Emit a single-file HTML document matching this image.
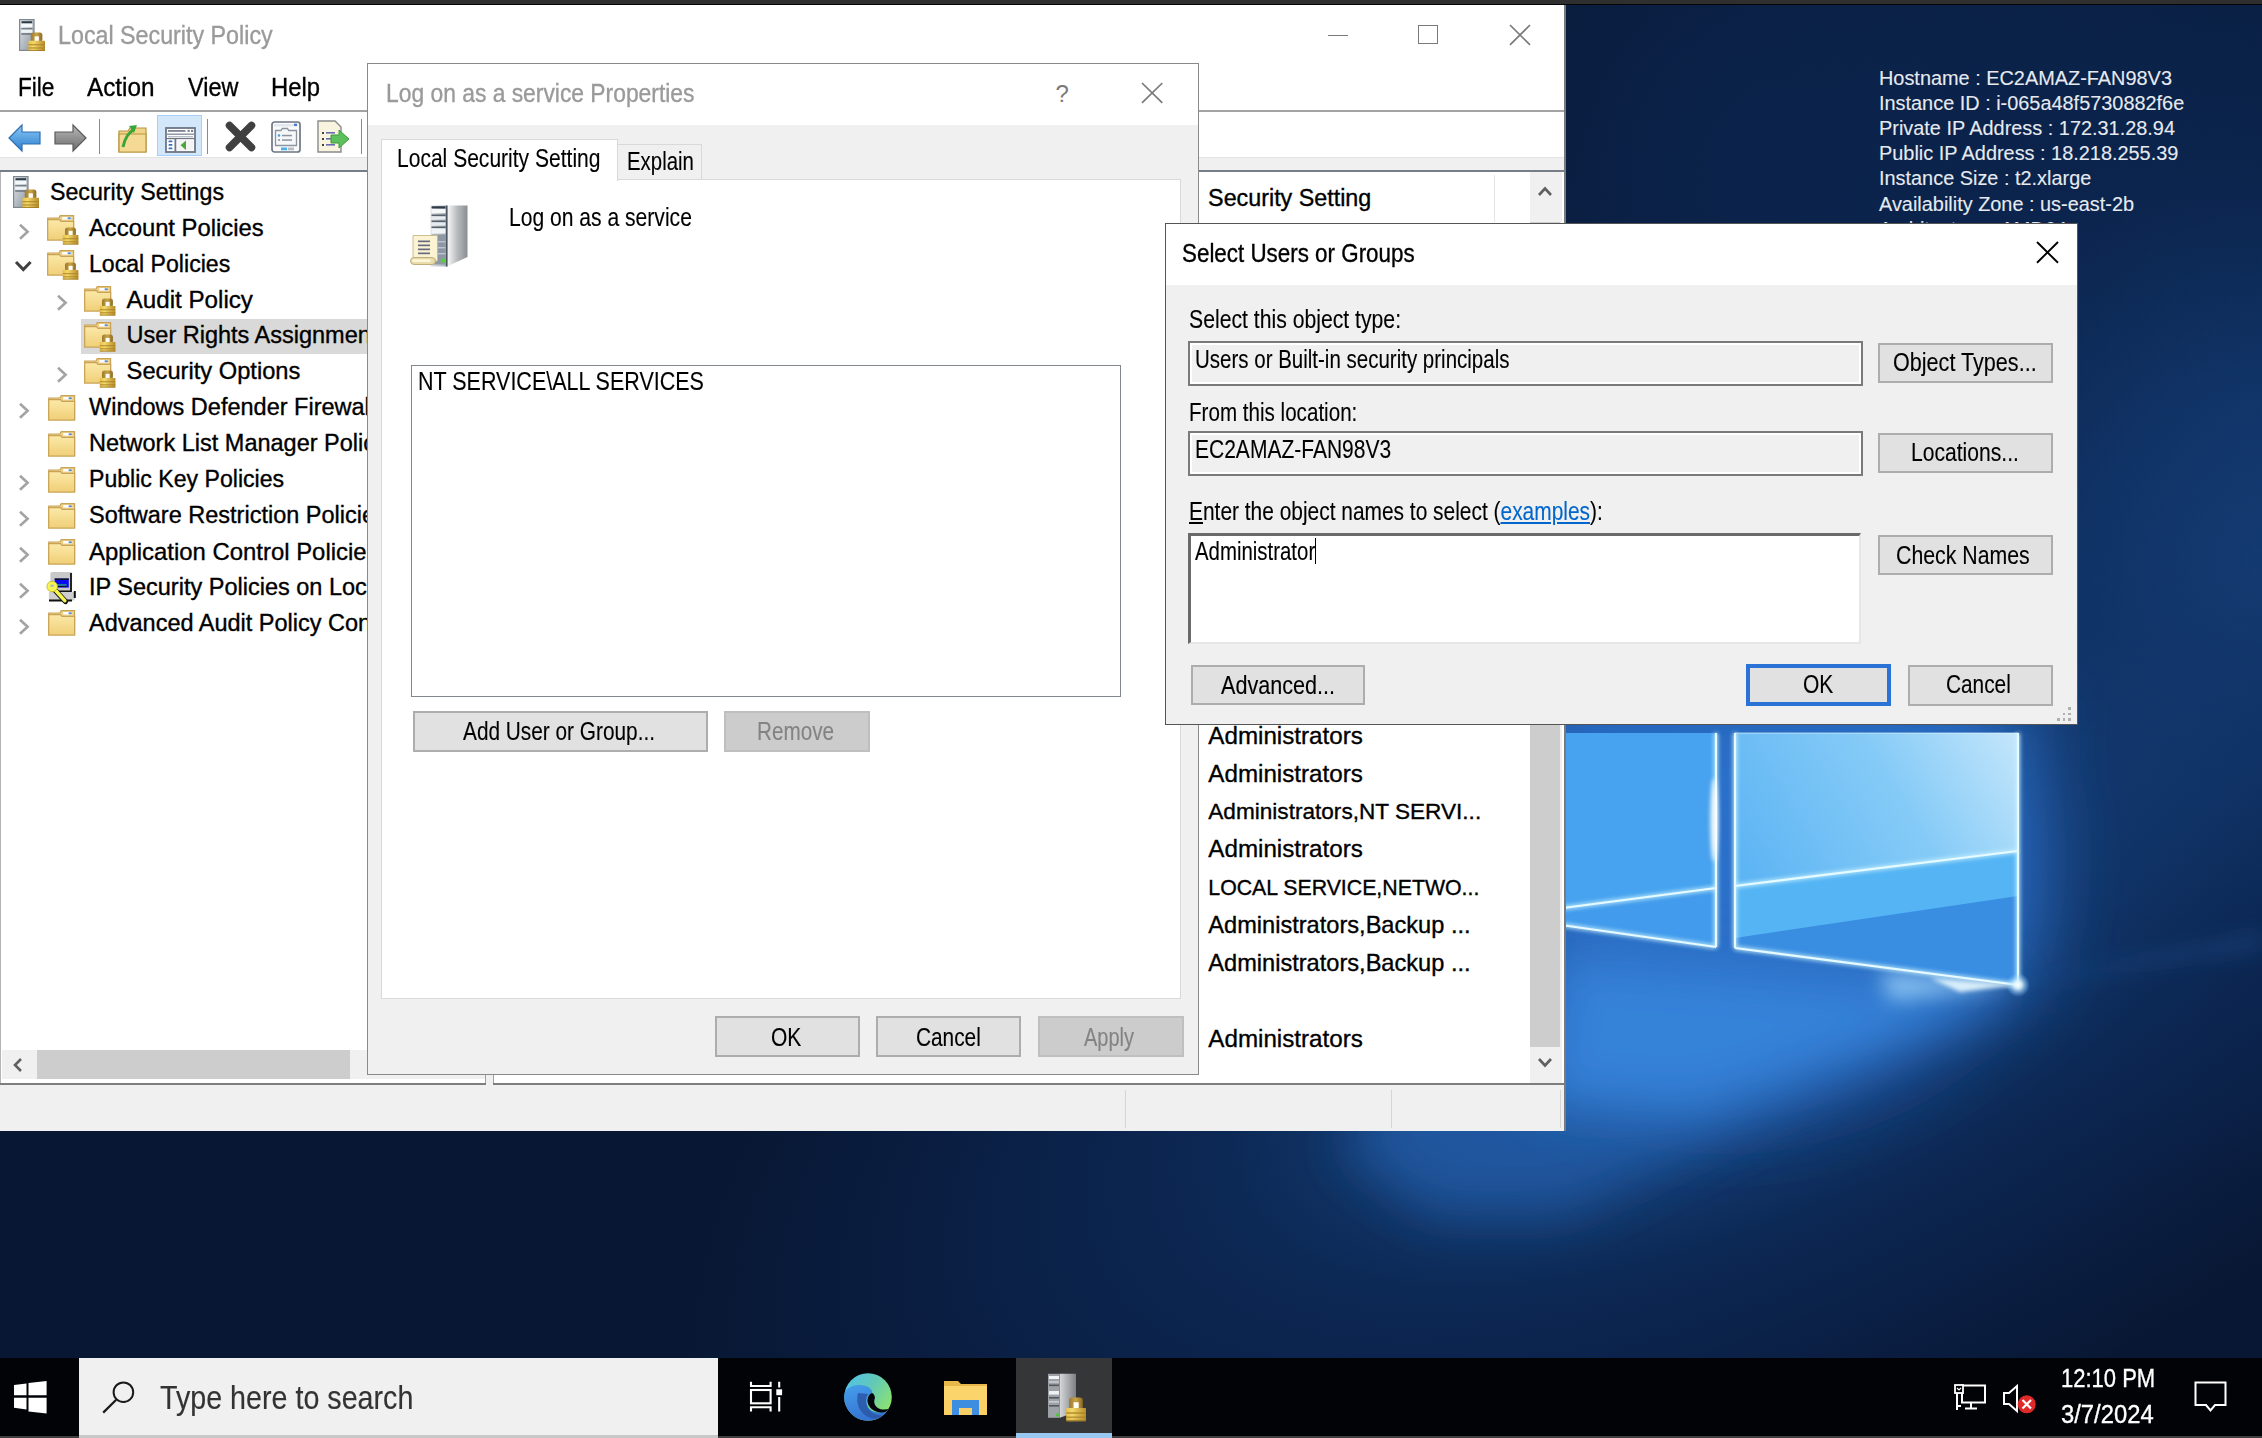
<!DOCTYPE html>
<html><head><meta charset="utf-8"><title>Local Security Policy</title>
<style>
html,body{margin:0;padding:0;}
body{width:2262px;height:1438px;overflow:hidden;position:relative;font-family:"Liberation Sans", sans-serif;background:#0a1c3c;}
.r{position:absolute;display:block;}
.t{position:absolute;white-space:pre;font-family:"Liberation Sans", sans-serif;-webkit-text-stroke:0.35px currentColor;}
</style></head><body>
<svg class="r" style="left:0.00px;top:0.00px;" width="2262" height="1438" viewBox="0 0 2262 1438">
<defs>
  <radialGradient id="wbase" cx="1750" cy="960" r="1150" gradientUnits="userSpaceOnUse" gradientTransform="translate(1750 960) rotate(-25) scale(1 0.45) translate(-1750 -960)">
  <stop offset="0" stop-color="#2660b0"/><stop offset="0.22" stop-color="#17447f"/><stop offset="0.5" stop-color="#0c2854"/><stop offset="0.8" stop-color="#0a1d40"/><stop offset="1" stop-color="#081834"/>
 </radialGradient>
 <radialGradient id="wtr" cx="2262" cy="560" r="380" gradientUnits="userSpaceOnUse">
  <stop offset="0" stop-color="#1a4a8a" stop-opacity="0.45"/><stop offset="1" stop-color="#1a4a8a" stop-opacity="0"/>
 </radialGradient>
 <radialGradient id="wtl" cx="1750" cy="150" r="600" gradientUnits="userSpaceOnUse">
  <stop offset="0" stop-color="#0e2c5e" stop-opacity="0.45"/><stop offset="1" stop-color="#0e2c5e" stop-opacity="0"/>
 </radialGradient>
 <radialGradient id="wtop" cx="2262" cy="420" r="760" gradientUnits="userSpaceOnUse">
  <stop offset="0" stop-color="#113a74" stop-opacity="0.6"/><stop offset="0.6" stop-color="#0c2a5a" stop-opacity="0.35"/><stop offset="1" stop-color="#0c2a5a" stop-opacity="0"/>
 </radialGradient>
<filter id="blur40" x="-50%" y="-50%" width="200%" height="200%"><feGaussianBlur stdDeviation="38"/></filter>
 <filter id="blur25" x="-50%" y="-50%" width="200%" height="200%"><feGaussianBlur stdDeviation="26"/></filter>
 <filter id="blur12" x="-50%" y="-50%" width="200%" height="200%"><feGaussianBlur stdDeviation="10"/></filter>
 <filter id="blur3" x="-50%" y="-50%" width="200%" height="200%"><feGaussianBlur stdDeviation="2.2"/></filter>
 <linearGradient id="paneR" x1="1735" y1="900" x2="2018" y2="733" gradientUnits="userSpaceOnUse">
  <stop offset="0" stop-color="#58b2f3"/><stop offset="0.6" stop-color="#86cbf7"/><stop offset="1" stop-color="#c4e6fb"/>
 </linearGradient>
 <radialGradient id="spot2" cx="2018" cy="985" r="12" gradientUnits="userSpaceOnUse"><stop offset="0" stop-color="#ffffff"/><stop offset="0.3" stop-color="#e0f6ff" stop-opacity="0.9"/><stop offset="1" stop-color="#7cc8ff" stop-opacity="0"/></radialGradient>
 <radialGradient id="spot" cx="2018" cy="985" r="60" gradientUnits="userSpaceOnUse">
  <stop offset="0" stop-color="#ffffff" stop-opacity="1"/><stop offset="0.25" stop-color="#bfe6ff" stop-opacity="0.8"/><stop offset="1" stop-color="#5ab0f0" stop-opacity="0"/>
 </radialGradient>
</defs>
<rect x="0" y="0" width="2262" height="1438" fill="#081834"/><rect x="0" y="0" width="2262" height="1438" fill="url(#wbase)"/>
<rect x="0" y="0" width="2262" height="1438" fill="url(#wtop)"/><rect x="0" y="0" width="2262" height="1438" fill="url(#wtl)"/><rect x="0" y="0" width="2262" height="1438" fill="url(#wtr)"/>
<g filter="url(#blur40)">
 <ellipse cx="1720" cy="860" rx="330" ry="260" fill="#1c55a4" opacity="0.85"/>
 <path d="M1540,700 L2030,700 L2030,990 L1540,960 Z" fill="#2b72cc" opacity="0.95"/>
</g>
<g filter="url(#blur25)">
 <path d="M2018,985 L1530,945 L1400,1060 L1340,1150 L1430,1215 L1566,1215 L1800,1100 Z" fill="#2566b8" opacity="0.62"/>
 <path d="M2016,985 L1560,950 L1540,1100 L1700,1110 L1880,1050 Z" fill="#3a88e0" opacity="0.85"/>
</g>
<g filter="url(#blur12)">
 <path d="M2018,985 L1880,972 L1890,1000 Z" fill="#a8dcff" opacity="0.75"/>
 <path d="M2018,985 L2262,930 L2262,950 Z" fill="#3a7ad0" opacity="0.2"/>
</g>
<!-- left pane -->
<path d="M1540,733 L1716,733 L1716,947 L1540,922 Z" fill="#47a3ef"/>
<path d="M1540,911 L1716,888 L1716,947 L1540,922 Z" fill="#429bec"/>
<!-- right pane -->
<path d="M1735,733 L2018,733 L2018,985 L1735,948 Z" fill="#55b4f4"/>
<path d="M1735,733 L2018,733 L2018,851 L1735,886 Z" fill="url(#paneR)"/>
<path d="M1735,938 L2018,896 L2018,985 L1735,948 Z" fill="#3a8ee2"/>
<g filter="url(#blur3)" stroke="#c8f2ff" fill="none" opacity="0.9">
 <path d="M1716,733 V947 M1540,911 L1716,888 M1540,922 L1716,947 M1735,733 V948 H1735 M1735,886 L2018,851 M1735,948 L2018,985 M2018,733 V985" stroke-width="4"/>
</g>
<g stroke="#e6fbff" fill="none">
 <path d="M1716,733 V947 M1540,911 L1716,888 M1540,922 L1716,947 M1735,733 V948 M1735,886 L2018,851 M1735,948 L2018,985 M2018,733 V985" stroke-width="2.2"/>
 <path d="M1735,733 H2018" stroke-width="1.4" opacity="0.45"/>
</g>
<circle cx="2018" cy="985" r="12" fill="url(#spot2)"/>
<g filter="url(#blur3)"><ellipse cx="1714" cy="820" rx="3.5" ry="42" fill="#ffffff" opacity="0.9"/><path d="M2018,985 L1930,978 L1960,992 Z" fill="#e8f8ff" opacity="0.9"/></g>
</svg><div class="t" style="left:1879.00px;top:69.25px;font-size:19.9px;line-height:19.9px;color:#e6eaf0;-webkit-text-stroke:0.1px currentColor;">Hostname : EC2AMAZ-FAN98V3</div><div class="t" style="left:1879.00px;top:94.31px;font-size:19.9px;line-height:19.9px;color:#e6eaf0;-webkit-text-stroke:0.1px currentColor;">Instance ID : i-065a48f5730882f6e</div><div class="t" style="left:1879.00px;top:119.37px;font-size:19.9px;line-height:19.9px;color:#e6eaf0;-webkit-text-stroke:0.1px currentColor;">Private IP Address : 172.31.28.94</div><div class="t" style="left:1879.00px;top:144.43px;font-size:19.9px;line-height:19.9px;color:#e6eaf0;-webkit-text-stroke:0.1px currentColor;">Public IP Address : 18.218.255.39</div><div class="t" style="left:1879.00px;top:169.49px;font-size:19.9px;line-height:19.9px;color:#e6eaf0;-webkit-text-stroke:0.1px currentColor;">Instance Size : t2.xlarge</div><div class="t" style="left:1879.00px;top:194.55px;font-size:19.9px;line-height:19.9px;color:#e6eaf0;-webkit-text-stroke:0.1px currentColor;">Availability Zone : us-east-2b</div><div class="t" style="left:1879.00px;top:219.61px;font-size:19.9px;line-height:19.9px;color:#e6eaf0;-webkit-text-stroke:0.1px currentColor;">Architecture : AMD64</div><div class="r" style="left:0.00px;top:0.00px;width:2262.00px;height:4.00px;background:#2f2f2f;"></div><div class="r" style="left:0.00px;top:4.00px;width:2262.00px;height:1.20px;background:#050505;"></div><div class="r" style="left:0.00px;top:5.00px;width:1566.00px;height:1126.00px;background:#ffffff;"></div><svg class="r" style="left:18.60px;top:18.60px;" width="26" height="32" viewBox="0 0 26 32"><defs><linearGradient id="sv1" x1="0" y1="0" x2="1" y2="1"><stop offset="0" stop-color="#e4e8ec"/><stop offset="1" stop-color="#8a939c"/></linearGradient></defs><rect x="0.6" y="0.6" width="14.40" height="30.80" fill="url(#sv1)" stroke="#7e868e" stroke-width="1.2"/><rect x="2.5" y="2.2" width="10.60" height="2.2" fill="#2e3d47"/><rect x="2.2" y="4.6" width="11.20" height="3.6" fill="#f4f8fa"/><rect x="2.2" y="9.3" width="11.20" height="1.2" fill="#56616b"/><rect x="2.2" y="10.6" width="11.20" height="3.2" fill="#eef3f6"/><rect x="2.2" y="14.4" width="11.20" height="1.2" fill="#56616b"/><defs><linearGradient id="lk2" x1="0" y1="0" x2="1" y2="0"><stop offset="0" stop-color="#e6bf4a"/><stop offset="0.3" stop-color="#f3d86a"/><stop offset="1" stop-color="#b88d2c"/></linearGradient><linearGradient id="lks3" x1="0" y1="0" x2="1" y2="0"><stop offset="0" stop-color="#9a7a34"/><stop offset="0.5" stop-color="#c9a444"/><stop offset="1" stop-color="#8c6a24"/></linearGradient></defs><rect x="11.80" y="13.60" width="11.56" height="9.20" rx="2.64" fill="url(#lks3)"/><rect x="15.60" y="17.28" width="4.29" height="4.78" fill="#fffdf4"/><rect x="9.49" y="21.70" width="16.51" height="10.30" rx="0.6" fill="url(#lk2)"/><rect x="9.49" y="25.01" width="16.51" height="1.29" fill="#a98224" opacity="0.75"/><rect x="9.49" y="28.32" width="16.51" height="1.29" fill="#a98224" opacity="0.75"/><rect x="9.49" y="30.90" width="16.51" height="1.10" fill="#9a7420" opacity="0.8"/></svg><div class="t" style="left:57.50px;top:22.53px;font-size:25.6px;line-height:25.6px;color:#9a9a9a;transform:scaleX(0.909);transform-origin:0 0;">Local Security Policy</div><div class="r" style="left:1328.00px;top:34.50px;width:20.00px;height:1.70px;background:#7a7a7a;"></div><div class="r" style="left:1418.00px;top:24.70px;width:20.00px;height:19.60px;background:transparent;box-sizing:border-box;border:1.8px solid #7a7a7a;"></div><svg class="r" style="left:1508.00px;top:22.70px;" width="24" height="23.8" viewBox="0 0 24 23.8"><path d="M2,2 L22.00,21.80 M22.00,2 L2,21.80" stroke="#7a7a7a" stroke-width="1.7" fill="none"/></svg><div class="t" style="left:17.60px;top:74.39px;font-size:26px;line-height:26px;color:#000;transform:scaleX(0.869);transform-origin:0 0;">File</div><div class="t" style="left:86.60px;top:74.39px;font-size:26px;line-height:26px;color:#000;transform:scaleX(0.935);transform-origin:0 0;">Action</div><div class="t" style="left:188.30px;top:74.39px;font-size:26px;line-height:26px;color:#000;transform:scaleX(0.900);transform-origin:0 0;">View</div><div class="t" style="left:270.60px;top:74.39px;font-size:26px;line-height:26px;color:#000;transform:scaleX(0.915);transform-origin:0 0;">Help</div><div class="r" style="left:0.00px;top:110.40px;width:1566.00px;height:1.60px;background:#a3a3a3;"></div><svg class="r" style="left:8.00px;top:123.00px;" width="33" height="30" viewBox="0 0 33 30"><defs><linearGradient id="ba" x1="0" y1="0" x2="0" y2="1"><stop offset="0" stop-color="#8cc8f5"/><stop offset="1" stop-color="#2a7fd0"/></linearGradient></defs><path d="M1,15 L14,2 V9 H32 V21 H14 V28 Z" fill="url(#ba)" stroke="#2f6fb0" stroke-width="1.2"/></svg><svg class="r" style="left:54.00px;top:123.00px;" width="33" height="30" viewBox="0 0 33 30"><defs><linearGradient id="fa" x1="0" y1="0" x2="0" y2="1"><stop offset="0" stop-color="#b8b8b8"/><stop offset="1" stop-color="#6c6c6c"/></linearGradient></defs><path d="M32,15 L19,2 V9 H1 V21 H19 V28 Z" fill="url(#fa)" stroke="#5a5a5a" stroke-width="1.2"/></svg><div class="r" style="left:98.60px;top:118.50px;width:1.60px;height:35.50px;background:#8a8a8a;"></div><svg class="r" style="left:118.00px;top:121.00px;" width="30" height="32" viewBox="0 0 30 32"><path d="M1,10 H10 L12,7 H28 V31 H1 Z" fill="#f1d48a" stroke="#b8963f" stroke-width="1.2"/><path d="M1,13 H28 V31 H1 Z" fill="#f4da95" stroke="#b8963f" stroke-width="1.2"/><path d="M5,26 C7,16 11,12 16,8" fill="none" stroke="#3aa53a" stroke-width="3"/><path d="M11,5 L19,4 L16,12 Z" fill="#3aa53a"/></svg><div class="r" style="left:156.70px;top:114.70px;width:45.30px;height:41.20px;background:#d3e7fb;box-sizing:border-box;border:1.8px solid #a6d0fa;"></div><svg class="r" style="left:164.80px;top:126.70px;" width="31" height="26" viewBox="0 0 31 26"><rect x="1" y="1" width="29" height="24" fill="#fff" stroke="#6e7684" stroke-width="1.8"/><rect x="3" y="3" width="17.5" height="1.8" fill="#7c8492"/><rect x="22.5" y="2.8" width="2.2" height="2.2" fill="#7c8492"/><rect x="26" y="2.8" width="2.2" height="2.2" fill="#7c8492"/><rect x="1" y="6.5" width="29" height="1.4" fill="#8a92a0"/><rect x="3" y="9" width="25" height="1.4" fill="#b8bec8"/><rect x="1" y="11" width="29" height="1.2" fill="#6e7684"/><rect x="9.5" y="11" width="1.8" height="14" fill="#6e7684"/><rect x="3.5" y="13.5" width="4" height="1.8" rx="0.9" fill="#3a6cc0"/><rect x="3.5" y="17" width="4" height="1.8" rx="0.9" fill="#3a6cc0"/><rect x="3.5" y="20.5" width="4" height="1.8" rx="0.9" fill="#3a6cc0"/><rect x="12.5" y="12.5" width="16" height="11" fill="#f4f4f4"/><path d="M21,13.5 L15.5,18.3 L21,23 Z" fill="#4aa83a"/></svg><div class="r" style="left:206.50px;top:118.60px;width:1.60px;height:35.10px;background:#8a8a8a;"></div><svg class="r" style="left:223.70px;top:120.00px;" width="33" height="33" viewBox="0 0 33 33"><path d="M5.5,5.5 L27.5,27.5 M27.5,5.5 L5.5,27.5" stroke="#404040" stroke-width="7.5" stroke-linecap="round"/></svg><svg class="r" style="left:270.60px;top:121.00px;" width="30" height="32" viewBox="0 0 30 32"><rect x="1" y="1" width="28" height="30" rx="2.5" fill="#fbfbfb" stroke="#6e7684" stroke-width="1.7"/><rect x="3" y="3" width="24" height="2.6" fill="#e4e8ee"/><rect x="23" y="2.6" width="3" height="2.4" fill="#4a80c8"/><path d="M4.5,9.5 H10 L11.2,7.5 H16.5 L17.7,9.5 H25.5 V24.5 H4.5 Z" fill="#f6f7f9" stroke="#8a93a0" stroke-width="1.3"/><circle cx="8" cy="14.5" r="1.3" fill="#3aa0f0"/><circle cx="8" cy="19" r="1.1" fill="#8a93a0"/><rect x="11" y="13.8" width="10" height="1.5" fill="#8a93a0"/><rect x="11" y="18.3" width="10" height="1.5" fill="#8a93a0"/><rect x="10" y="26.5" width="6" height="2.8" fill="#4ab0ec"/><rect x="17" y="26.5" width="6" height="2.8" fill="#b8bcc2"/></svg><svg class="r" style="left:316.50px;top:120.00px;" width="33" height="33" viewBox="0 0 33 33"><path d="M1,1 H18 L24,7 V32 H1 Z" fill="#f8f4e0" stroke="#8a8a8a" stroke-width="1.4"/><rect x="5" y="12" width="2" height="2" fill="#444"/><rect x="9" y="12" width="9" height="1.6" fill="#6a6ab0"/><rect x="5" y="18" width="2" height="2" fill="#444"/><rect x="9" y="18" width="9" height="1.6" fill="#6a6ab0"/><rect x="5" y="24" width="2" height="2" fill="#444"/><rect x="9" y="24" width="9" height="1.6" fill="#6a6ab0"/><path d="M14,15 H22 V10 L32,19 L22,28 V23 H14 Z" fill="#5cc05c" stroke="#3a9a3a" stroke-width="1"/></svg><div class="r" style="left:360.50px;top:118.60px;width:1.50px;height:35.10px;background:#8a8a8a;"></div><div class="r" style="left:0.00px;top:156.50px;width:1566.00px;height:1.00px;background:#e3e3e3;"></div><div class="r" style="left:0.00px;top:157.50px;width:1566.00px;height:12.70px;background:#f0f0f0;"></div><div class="r" style="left:0.00px;top:170.20px;width:1566.00px;height:2.00px;background:#767c88;"></div><div class="r" style="left:0.00px;top:172.20px;width:485.00px;height:912.80px;background:#ffffff;"></div><div class="r" style="left:0.00px;top:172.20px;width:1.20px;height:912.80px;background:#b4b4b4;"></div><div class="r" style="left:485.00px;top:172.20px;width:8.00px;height:912.80px;background:#f0f0f0;"></div><div class="r" style="left:484.50px;top:172.20px;width:1.50px;height:912.80px;background:#a0a0a0;"></div><div class="r" style="left:0.00px;top:1083.20px;width:486.00px;height:1.80px;background:#7e7e7e;"></div><div class="r" style="left:493.00px;top:172.20px;width:1071.50px;height:912.80px;background:#ffffff;"></div><div class="r" style="left:492.50px;top:172.20px;width:1.50px;height:912.80px;background:#a0a0a0;"></div><div class="r" style="left:493.00px;top:1083.20px;width:1071.50px;height:1.80px;background:#7e7e7e;"></div><div class="r" style="left:1564.40px;top:5.00px;width:1.60px;height:1126.00px;background:#7a7a7a;"></div><div class="r" style="left:0.00px;top:1085.00px;width:1564.40px;height:46.00px;background:#f0f0f0;"></div><div class="r" style="left:1124.50px;top:1090.00px;width:1.30px;height:38.00px;background:#d5d5d5;"></div><div class="r" style="left:1390.50px;top:1090.00px;width:1.30px;height:38.00px;background:#d5d5d5;"></div><div class="r" style="left:1560.20px;top:1090.00px;width:1.30px;height:38.00px;background:#d5d5d5;"></div><svg class="r" style="left:12.50px;top:176.40px;" width="26" height="32" viewBox="0 0 26 32"><defs><linearGradient id="sv4" x1="0" y1="0" x2="1" y2="1"><stop offset="0" stop-color="#e4e8ec"/><stop offset="1" stop-color="#8a939c"/></linearGradient></defs><rect x="0.6" y="0.6" width="14.40" height="30.80" fill="url(#sv4)" stroke="#7e868e" stroke-width="1.2"/><rect x="2.5" y="2.2" width="10.60" height="2.2" fill="#2e3d47"/><rect x="2.2" y="4.6" width="11.20" height="3.6" fill="#f4f8fa"/><rect x="2.2" y="9.3" width="11.20" height="1.2" fill="#56616b"/><rect x="2.2" y="10.6" width="11.20" height="3.2" fill="#eef3f6"/><rect x="2.2" y="14.4" width="11.20" height="1.2" fill="#56616b"/><defs><linearGradient id="lk5" x1="0" y1="0" x2="1" y2="0"><stop offset="0" stop-color="#e6bf4a"/><stop offset="0.3" stop-color="#f3d86a"/><stop offset="1" stop-color="#b88d2c"/></linearGradient><linearGradient id="lks6" x1="0" y1="0" x2="1" y2="0"><stop offset="0" stop-color="#9a7a34"/><stop offset="0.5" stop-color="#c9a444"/><stop offset="1" stop-color="#8c6a24"/></linearGradient></defs><rect x="11.80" y="13.60" width="11.56" height="9.20" rx="2.64" fill="url(#lks6)"/><rect x="15.60" y="17.28" width="4.29" height="4.78" fill="#fffdf4"/><rect x="9.49" y="21.70" width="16.51" height="10.30" rx="0.6" fill="url(#lk5)"/><rect x="9.49" y="25.01" width="16.51" height="1.29" fill="#a98224" opacity="0.75"/><rect x="9.49" y="28.32" width="16.51" height="1.29" fill="#a98224" opacity="0.75"/><rect x="9.49" y="30.90" width="16.51" height="1.10" fill="#9a7420" opacity="0.8"/></svg><div class="t" style="left:50.00px;top:180.86px;font-size:23.2px;line-height:23.2px;color:#000;">Security Settings</div><svg class="r" style="left:18.20px;top:222.53px;" width="13" height="18" viewBox="0 0 13 18"><path d="M2,1.8 L9.6,8.8 L2,15.8" fill="none" stroke="#a3a3a3" stroke-width="2.6"/></svg><svg class="r" style="left:46.70px;top:214.53px;" width="32" height="30" viewBox="0 0 32 30"><defs><linearGradient id="fd7" x1="0" y1="0" x2="0" y2="1"><stop offset="0" stop-color="#fbe9a8"/><stop offset="1" stop-color="#f0cf78"/></linearGradient></defs><path d="M0.7,3 H12 L13.2,0.7 H26.6 V25 H0.7 Z" fill="#eccf86" stroke="#c9a457" stroke-width="1.2"/><rect x="15.2" y="2" width="9" height="2.6" fill="#fff"/><rect x="20.5" y="2.2" width="3.5" height="2" rx="1" fill="#5a8fd8"/><path d="M0.7,4.6 H12.5 L14,6.4 H26.6 V25 H0.7 Z" fill="url(#fd7)" stroke="#c9a457" stroke-width="1.2"/><defs><linearGradient id="lk8" x1="0" y1="0" x2="1" y2="0"><stop offset="0" stop-color="#e6bf4a"/><stop offset="0.3" stop-color="#f3d86a"/><stop offset="1" stop-color="#b88d2c"/></linearGradient><linearGradient id="lks9" x1="0" y1="0" x2="1" y2="0"><stop offset="0" stop-color="#9a7a34"/><stop offset="0.5" stop-color="#c9a444"/><stop offset="1" stop-color="#8c6a24"/></linearGradient></defs><rect x="17.98" y="12.40" width="10.92" height="8.60" rx="2.50" fill="url(#lks9)"/><rect x="21.57" y="15.84" width="4.06" height="4.47" fill="#fffdf4"/><rect x="15.80" y="19.97" width="15.60" height="9.63" rx="0.6" fill="url(#lk8)"/><rect x="15.80" y="23.06" width="15.60" height="1.20" fill="#a98224" opacity="0.75"/><rect x="15.80" y="26.16" width="15.60" height="1.20" fill="#a98224" opacity="0.75"/><rect x="15.80" y="28.57" width="15.60" height="1.03" fill="#9a7420" opacity="0.8"/></svg><div class="t" style="left:89.00px;top:216.28px;font-size:23.8px;line-height:23.8px;color:#000;">Account Policies</div><svg class="r" style="left:14.40px;top:260.06px;" width="19" height="13" viewBox="0 0 19 13"><path d="M2,2 L9.3,9.6 L16.6,2" fill="none" stroke="#404040" stroke-width="3"/></svg><svg class="r" style="left:46.70px;top:250.46px;" width="32" height="30" viewBox="0 0 32 30"><defs><linearGradient id="fd10" x1="0" y1="0" x2="0" y2="1"><stop offset="0" stop-color="#fbe9a8"/><stop offset="1" stop-color="#f0cf78"/></linearGradient></defs><path d="M0.7,3 H12 L13.2,0.7 H26.6 V25 H0.7 Z" fill="#eccf86" stroke="#c9a457" stroke-width="1.2"/><rect x="15.2" y="2" width="9" height="2.6" fill="#fff"/><rect x="20.5" y="2.2" width="3.5" height="2" rx="1" fill="#5a8fd8"/><path d="M0.7,4.6 H12.5 L14,6.4 H26.6 V25 H0.7 Z" fill="url(#fd10)" stroke="#c9a457" stroke-width="1.2"/><defs><linearGradient id="lk11" x1="0" y1="0" x2="1" y2="0"><stop offset="0" stop-color="#e6bf4a"/><stop offset="0.3" stop-color="#f3d86a"/><stop offset="1" stop-color="#b88d2c"/></linearGradient><linearGradient id="lks12" x1="0" y1="0" x2="1" y2="0"><stop offset="0" stop-color="#9a7a34"/><stop offset="0.5" stop-color="#c9a444"/><stop offset="1" stop-color="#8c6a24"/></linearGradient></defs><rect x="17.98" y="12.40" width="10.92" height="8.60" rx="2.50" fill="url(#lks12)"/><rect x="21.57" y="15.84" width="4.06" height="4.47" fill="#fffdf4"/><rect x="15.80" y="19.97" width="15.60" height="9.63" rx="0.6" fill="url(#lk11)"/><rect x="15.80" y="23.06" width="15.60" height="1.20" fill="#a98224" opacity="0.75"/><rect x="15.80" y="26.16" width="15.60" height="1.20" fill="#a98224" opacity="0.75"/><rect x="15.80" y="28.57" width="15.60" height="1.03" fill="#9a7420" opacity="0.8"/></svg><div class="t" style="left:89.00px;top:252.81px;font-size:23.1px;line-height:23.1px;color:#000;">Local Policies</div><svg class="r" style="left:55.80px;top:294.39px;" width="13" height="18" viewBox="0 0 13 18"><path d="M2,1.8 L9.6,8.8 L2,15.8" fill="none" stroke="#a3a3a3" stroke-width="2.6"/></svg><svg class="r" style="left:84.30px;top:286.39px;" width="32" height="30" viewBox="0 0 32 30"><defs><linearGradient id="fd13" x1="0" y1="0" x2="0" y2="1"><stop offset="0" stop-color="#fbe9a8"/><stop offset="1" stop-color="#f0cf78"/></linearGradient></defs><path d="M0.7,3 H12 L13.2,0.7 H26.6 V25 H0.7 Z" fill="#eccf86" stroke="#c9a457" stroke-width="1.2"/><rect x="15.2" y="2" width="9" height="2.6" fill="#fff"/><rect x="20.5" y="2.2" width="3.5" height="2" rx="1" fill="#5a8fd8"/><path d="M0.7,4.6 H12.5 L14,6.4 H26.6 V25 H0.7 Z" fill="url(#fd13)" stroke="#c9a457" stroke-width="1.2"/><defs><linearGradient id="lk14" x1="0" y1="0" x2="1" y2="0"><stop offset="0" stop-color="#e6bf4a"/><stop offset="0.3" stop-color="#f3d86a"/><stop offset="1" stop-color="#b88d2c"/></linearGradient><linearGradient id="lks15" x1="0" y1="0" x2="1" y2="0"><stop offset="0" stop-color="#9a7a34"/><stop offset="0.5" stop-color="#c9a444"/><stop offset="1" stop-color="#8c6a24"/></linearGradient></defs><rect x="17.98" y="12.40" width="10.92" height="8.60" rx="2.50" fill="url(#lks15)"/><rect x="21.57" y="15.84" width="4.06" height="4.47" fill="#fffdf4"/><rect x="15.80" y="19.97" width="15.60" height="9.63" rx="0.6" fill="url(#lk14)"/><rect x="15.80" y="23.06" width="15.60" height="1.20" fill="#a98224" opacity="0.75"/><rect x="15.80" y="26.16" width="15.60" height="1.20" fill="#a98224" opacity="0.75"/><rect x="15.80" y="28.57" width="15.60" height="1.03" fill="#9a7420" opacity="0.8"/></svg><div class="t" style="left:126.60px;top:287.80px;font-size:24.2px;line-height:24.2px;color:#000;">Audit Policy</div><div class="r" style="left:80.70px;top:318.72px;width:286.30px;height:35.00px;background:#d9d9d9;"></div><svg class="r" style="left:84.30px;top:322.32px;" width="32" height="30" viewBox="0 0 32 30"><defs><linearGradient id="fd16" x1="0" y1="0" x2="0" y2="1"><stop offset="0" stop-color="#fbe9a8"/><stop offset="1" stop-color="#f0cf78"/></linearGradient></defs><path d="M0.7,3 H12 L13.2,0.7 H26.6 V25 H0.7 Z" fill="#eccf86" stroke="#c9a457" stroke-width="1.2"/><rect x="15.2" y="2" width="9" height="2.6" fill="#fff"/><rect x="20.5" y="2.2" width="3.5" height="2" rx="1" fill="#5a8fd8"/><path d="M0.7,4.6 H12.5 L14,6.4 H26.6 V25 H0.7 Z" fill="url(#fd16)" stroke="#c9a457" stroke-width="1.2"/><defs><linearGradient id="lk17" x1="0" y1="0" x2="1" y2="0"><stop offset="0" stop-color="#e6bf4a"/><stop offset="0.3" stop-color="#f3d86a"/><stop offset="1" stop-color="#b88d2c"/></linearGradient><linearGradient id="lks18" x1="0" y1="0" x2="1" y2="0"><stop offset="0" stop-color="#9a7a34"/><stop offset="0.5" stop-color="#c9a444"/><stop offset="1" stop-color="#8c6a24"/></linearGradient></defs><rect x="17.98" y="12.40" width="10.92" height="8.60" rx="2.50" fill="url(#lks18)"/><rect x="21.57" y="15.84" width="4.06" height="4.47" fill="#fffdf4"/><rect x="15.80" y="19.97" width="15.60" height="9.63" rx="0.6" fill="url(#lk17)"/><rect x="15.80" y="23.06" width="15.60" height="1.20" fill="#a98224" opacity="0.75"/><rect x="15.80" y="26.16" width="15.60" height="1.20" fill="#a98224" opacity="0.75"/><rect x="15.80" y="28.57" width="15.60" height="1.03" fill="#9a7420" opacity="0.8"/></svg><div class="t" style="left:126.60px;top:324.33px;font-size:23.5px;line-height:23.5px;color:#000;">User Rights Assignment</div><svg class="r" style="left:55.80px;top:366.25px;" width="13" height="18" viewBox="0 0 13 18"><path d="M2,1.8 L9.6,8.8 L2,15.8" fill="none" stroke="#a3a3a3" stroke-width="2.6"/></svg><svg class="r" style="left:84.30px;top:358.25px;" width="32" height="30" viewBox="0 0 32 30"><defs><linearGradient id="fd19" x1="0" y1="0" x2="0" y2="1"><stop offset="0" stop-color="#fbe9a8"/><stop offset="1" stop-color="#f0cf78"/></linearGradient></defs><path d="M0.7,3 H12 L13.2,0.7 H26.6 V25 H0.7 Z" fill="#eccf86" stroke="#c9a457" stroke-width="1.2"/><rect x="15.2" y="2" width="9" height="2.6" fill="#fff"/><rect x="20.5" y="2.2" width="3.5" height="2" rx="1" fill="#5a8fd8"/><path d="M0.7,4.6 H12.5 L14,6.4 H26.6 V25 H0.7 Z" fill="url(#fd19)" stroke="#c9a457" stroke-width="1.2"/><defs><linearGradient id="lk20" x1="0" y1="0" x2="1" y2="0"><stop offset="0" stop-color="#e6bf4a"/><stop offset="0.3" stop-color="#f3d86a"/><stop offset="1" stop-color="#b88d2c"/></linearGradient><linearGradient id="lks21" x1="0" y1="0" x2="1" y2="0"><stop offset="0" stop-color="#9a7a34"/><stop offset="0.5" stop-color="#c9a444"/><stop offset="1" stop-color="#8c6a24"/></linearGradient></defs><rect x="17.98" y="12.40" width="10.92" height="8.60" rx="2.50" fill="url(#lks21)"/><rect x="21.57" y="15.84" width="4.06" height="4.47" fill="#fffdf4"/><rect x="15.80" y="19.97" width="15.60" height="9.63" rx="0.6" fill="url(#lk20)"/><rect x="15.80" y="23.06" width="15.60" height="1.20" fill="#a98224" opacity="0.75"/><rect x="15.80" y="26.16" width="15.60" height="1.20" fill="#a98224" opacity="0.75"/><rect x="15.80" y="28.57" width="15.60" height="1.03" fill="#9a7420" opacity="0.8"/></svg><div class="t" style="left:126.60px;top:360.09px;font-size:23.7px;line-height:23.7px;color:#000;">Security Options</div><svg class="r" style="left:18.20px;top:402.18px;" width="13" height="18" viewBox="0 0 13 18"><path d="M2,1.8 L9.6,8.8 L2,15.8" fill="none" stroke="#a3a3a3" stroke-width="2.6"/></svg><svg class="r" style="left:48.30px;top:394.78px;" width="32" height="30" viewBox="0 0 32 30"><defs><linearGradient id="fd22" x1="0" y1="0" x2="0" y2="1"><stop offset="0" stop-color="#fbe9a8"/><stop offset="1" stop-color="#f0cf78"/></linearGradient></defs><path d="M0.7,3 H12 L13.2,0.7 H26.6 V25 H0.7 Z" fill="#eccf86" stroke="#c9a457" stroke-width="1.2"/><rect x="15.2" y="2" width="9" height="2.6" fill="#fff"/><rect x="20.5" y="2.2" width="3.5" height="2" rx="1" fill="#5a8fd8"/><path d="M0.7,4.6 H12.5 L14,6.4 H26.6 V25 H0.7 Z" fill="url(#fd22)" stroke="#c9a457" stroke-width="1.2"/></svg><div class="t" style="left:89.00px;top:396.19px;font-size:23.5px;line-height:23.5px;color:#000;">Windows Defender Firewall with Advanced Security</div><svg class="r" style="left:48.30px;top:430.71px;" width="32" height="30" viewBox="0 0 32 30"><defs><linearGradient id="fd23" x1="0" y1="0" x2="0" y2="1"><stop offset="0" stop-color="#fbe9a8"/><stop offset="1" stop-color="#f0cf78"/></linearGradient></defs><path d="M0.7,3 H12 L13.2,0.7 H26.6 V25 H0.7 Z" fill="#eccf86" stroke="#c9a457" stroke-width="1.2"/><rect x="15.2" y="2" width="9" height="2.6" fill="#fff"/><rect x="20.5" y="2.2" width="3.5" height="2" rx="1" fill="#5a8fd8"/><path d="M0.7,4.6 H12.5 L14,6.4 H26.6 V25 H0.7 Z" fill="url(#fd23)" stroke="#c9a457" stroke-width="1.2"/></svg><div class="t" style="left:89.00px;top:432.12px;font-size:23.5px;line-height:23.5px;color:#000;">Network List Manager Policies</div><svg class="r" style="left:18.20px;top:474.04px;" width="13" height="18" viewBox="0 0 13 18"><path d="M2,1.8 L9.6,8.8 L2,15.8" fill="none" stroke="#a3a3a3" stroke-width="2.6"/></svg><svg class="r" style="left:48.30px;top:466.64px;" width="32" height="30" viewBox="0 0 32 30"><defs><linearGradient id="fd24" x1="0" y1="0" x2="0" y2="1"><stop offset="0" stop-color="#fbe9a8"/><stop offset="1" stop-color="#f0cf78"/></linearGradient></defs><path d="M0.7,3 H12 L13.2,0.7 H26.6 V25 H0.7 Z" fill="#eccf86" stroke="#c9a457" stroke-width="1.2"/><rect x="15.2" y="2" width="9" height="2.6" fill="#fff"/><rect x="20.5" y="2.2" width="3.5" height="2" rx="1" fill="#5a8fd8"/><path d="M0.7,4.6 H12.5 L14,6.4 H26.6 V25 H0.7 Z" fill="url(#fd24)" stroke="#c9a457" stroke-width="1.2"/></svg><div class="t" style="left:89.00px;top:468.39px;font-size:23.1px;line-height:23.1px;color:#000;">Public Key Policies</div><svg class="r" style="left:18.20px;top:509.97px;" width="13" height="18" viewBox="0 0 13 18"><path d="M2,1.8 L9.6,8.8 L2,15.8" fill="none" stroke="#a3a3a3" stroke-width="2.6"/></svg><svg class="r" style="left:48.30px;top:502.57px;" width="32" height="30" viewBox="0 0 32 30"><defs><linearGradient id="fd25" x1="0" y1="0" x2="0" y2="1"><stop offset="0" stop-color="#fbe9a8"/><stop offset="1" stop-color="#f0cf78"/></linearGradient></defs><path d="M0.7,3 H12 L13.2,0.7 H26.6 V25 H0.7 Z" fill="#eccf86" stroke="#c9a457" stroke-width="1.2"/><rect x="15.2" y="2" width="9" height="2.6" fill="#fff"/><rect x="20.5" y="2.2" width="3.5" height="2" rx="1" fill="#5a8fd8"/><path d="M0.7,4.6 H12.5 L14,6.4 H26.6 V25 H0.7 Z" fill="url(#fd25)" stroke="#c9a457" stroke-width="1.2"/></svg><div class="t" style="left:89.00px;top:503.98px;font-size:23.5px;line-height:23.5px;color:#000;">Software Restriction Policies</div><svg class="r" style="left:18.20px;top:545.90px;" width="13" height="18" viewBox="0 0 13 18"><path d="M2,1.8 L9.6,8.8 L2,15.8" fill="none" stroke="#a3a3a3" stroke-width="2.6"/></svg><svg class="r" style="left:48.30px;top:538.50px;" width="32" height="30" viewBox="0 0 32 30"><defs><linearGradient id="fd26" x1="0" y1="0" x2="0" y2="1"><stop offset="0" stop-color="#fbe9a8"/><stop offset="1" stop-color="#f0cf78"/></linearGradient></defs><path d="M0.7,3 H12 L13.2,0.7 H26.6 V25 H0.7 Z" fill="#eccf86" stroke="#c9a457" stroke-width="1.2"/><rect x="15.2" y="2" width="9" height="2.6" fill="#fff"/><rect x="20.5" y="2.2" width="3.5" height="2" rx="1" fill="#5a8fd8"/><path d="M0.7,4.6 H12.5 L14,6.4 H26.6 V25 H0.7 Z" fill="url(#fd26)" stroke="#c9a457" stroke-width="1.2"/></svg><div class="t" style="left:89.00px;top:539.57px;font-size:23.9px;line-height:23.9px;color:#000;">Application Control Policies</div><svg class="r" style="left:18.20px;top:581.83px;" width="13" height="18" viewBox="0 0 13 18"><path d="M2,1.8 L9.6,8.8 L2,15.8" fill="none" stroke="#a3a3a3" stroke-width="2.6"/></svg><svg class="r" style="left:40.00px;top:565.03px;" width="44" height="44" viewBox="0 0 44 44"><path d="M10.4,8.5 Q10.4,7 12,7 H30.5 Q32.1,7 32.1,8.5 V26.3 H10.4 Z" fill="#c9c9c9"/><path d="M31,8 V26.3 H12" fill="none" stroke="#111" stroke-width="1.8"/><rect x="14.7" y="13.5" width="14.1" height="9.1" fill="#0a0af0"/><rect x="14.7" y="13.5" width="14.1" height="1.4" fill="#111"/><rect x="17" y="19.2" width="9.5" height="1.5" fill="#2a9a8a"/><rect x="17" y="21" width="9.5" height="1" fill="#111"/><path d="M8.9,27 H34.5 V35.4 H8.9 Z" fill="#cfcfcf"/><path d="M9,35.6 H32 M34.8,26 V33" stroke="#111" stroke-width="2"/><path d="M13,23 L25.5,36.5" stroke="#111" stroke-width="5.2" stroke-linecap="round"/><path d="M12.5,22 L24.8,35.6" stroke="#f6f650" stroke-width="3.6" stroke-linecap="round"/><circle cx="12.2" cy="21.5" r="5.3" fill="#f6f650" stroke="#b8b020" stroke-width="0.8"/><ellipse cx="12.2" cy="20.8" rx="2" ry="1.2" fill="#b8b8c8"/></svg><div class="t" style="left:89.00px;top:575.84px;font-size:23.5px;line-height:23.5px;color:#000;">IP Security Policies on Local Computer</div><svg class="r" style="left:18.20px;top:617.76px;" width="13" height="18" viewBox="0 0 13 18"><path d="M2,1.8 L9.6,8.8 L2,15.8" fill="none" stroke="#a3a3a3" stroke-width="2.6"/></svg><svg class="r" style="left:48.30px;top:610.36px;" width="32" height="30" viewBox="0 0 32 30"><defs><linearGradient id="fd27" x1="0" y1="0" x2="0" y2="1"><stop offset="0" stop-color="#fbe9a8"/><stop offset="1" stop-color="#f0cf78"/></linearGradient></defs><path d="M0.7,3 H12 L13.2,0.7 H26.6 V25 H0.7 Z" fill="#eccf86" stroke="#c9a457" stroke-width="1.2"/><rect x="15.2" y="2" width="9" height="2.6" fill="#fff"/><rect x="20.5" y="2.2" width="3.5" height="2" rx="1" fill="#5a8fd8"/><path d="M0.7,4.6 H12.5 L14,6.4 H26.6 V25 H0.7 Z" fill="url(#fd27)" stroke="#c9a457" stroke-width="1.2"/></svg><div class="t" style="left:89.00px;top:611.77px;font-size:23.5px;line-height:23.5px;color:#000;">Advanced Audit Policy Configuration</div><div class="r" style="left:1.50px;top:1049.70px;width:483.00px;height:29.80px;background:#f0f0f0;"></div><div class="r" style="left:36.80px;top:1049.70px;width:313.20px;height:29.80px;background:#cdcdcd;"></div><svg class="r" style="left:11.00px;top:1057.00px;" width="14" height="16" viewBox="0 0 14 16"><path d="M10,2 L4,8 L10,14" fill="none" stroke="#606060" stroke-width="2.6"/></svg><div class="r" style="left:1494.20px;top:175.00px;width:1.30px;height:47.00px;background:#e5e5e5;"></div><div class="t" style="left:1208.10px;top:187.28px;font-size:23.3px;line-height:23.3px;color:#000;">Security Setting</div><div class="r" style="left:1530.00px;top:172.20px;width:32.00px;height:911.00px;background:#f0f0f0;"></div><div class="r" style="left:1530.20px;top:222.00px;width:29.70px;height:825.00px;background:#cdcdcd;"></div><svg class="r" style="left:1537.00px;top:184.00px;" width="16" height="14" viewBox="0 0 16 14"><path d="M2,11 L8,4.5 L14,11" fill="none" stroke="#606060" stroke-width="2.6"/></svg><svg class="r" style="left:1537.00px;top:1056.00px;" width="16" height="14" viewBox="0 0 16 14"><path d="M2,3 L8,9.5 L14,3" fill="none" stroke="#606060" stroke-width="2.6"/></svg><div class="t" style="left:1208.30px;top:231.86px;font-size:24.2px;line-height:24.2px;color:#000;">Administrators</div><div class="t" style="left:1208.30px;top:269.71px;font-size:24.2px;line-height:24.2px;color:#000;">Administrators</div><div class="t" style="left:1208.30px;top:307.56px;font-size:24.2px;line-height:24.2px;color:#000;">Administrators</div><div class="t" style="left:1208.30px;top:345.41px;font-size:24.2px;line-height:24.2px;color:#000;">Administrators</div><div class="t" style="left:1208.30px;top:383.26px;font-size:24.2px;line-height:24.2px;color:#000;">Administrators</div><div class="t" style="left:1208.30px;top:421.11px;font-size:24.2px;line-height:24.2px;color:#000;">Administrators</div><div class="t" style="left:1208.30px;top:458.96px;font-size:24.2px;line-height:24.2px;color:#000;">Administrators</div><div class="t" style="left:1208.30px;top:496.81px;font-size:24.2px;line-height:24.2px;color:#000;">Administrators</div><div class="t" style="left:1208.30px;top:534.66px;font-size:24.2px;line-height:24.2px;color:#000;">Administrators</div><div class="t" style="left:1208.30px;top:572.51px;font-size:24.2px;line-height:24.2px;color:#000;">Administrators</div><div class="t" style="left:1208.30px;top:610.36px;font-size:24.2px;line-height:24.2px;color:#000;">Administrators</div><div class="t" style="left:1208.30px;top:648.21px;font-size:24.2px;line-height:24.2px;color:#000;">Administrators</div><div class="t" style="left:1208.30px;top:686.06px;font-size:24.2px;line-height:24.2px;color:#000;">Administrators</div><div class="t" style="left:1208.30px;top:723.91px;font-size:24.2px;line-height:24.2px;color:#000;">Administrators</div><div class="t" style="left:1208.30px;top:761.76px;font-size:24.2px;line-height:24.2px;color:#000;">Administrators</div><div class="t" style="left:1208.30px;top:800.97px;font-size:22.6px;line-height:22.6px;color:#000;">Administrators,NT SERVI...</div><div class="t" style="left:1208.30px;top:837.46px;font-size:24.2px;line-height:24.2px;color:#000;">Administrators</div><div class="t" style="left:1208.30px;top:877.77px;font-size:21.3px;line-height:21.3px;color:#000;">LOCAL SERVICE,NETWO...</div><div class="t" style="left:1208.30px;top:913.67px;font-size:23.6px;line-height:23.6px;color:#000;">Administrators,Backup ...</div><div class="t" style="left:1208.30px;top:951.52px;font-size:23.6px;line-height:23.6px;color:#000;">Administrators,Backup ...</div><div class="t" style="left:1208.30px;top:1026.71px;font-size:24.2px;line-height:24.2px;color:#000;">Administrators</div><div class="r" style="left:366.50px;top:63.00px;width:832.80px;height:1012.20px;background:#f0f0f0;"></div><div class="r" style="left:366.50px;top:63.00px;width:832.80px;height:62.00px;background:#ffffff;"></div><div class="r" style="left:366.50px;top:63.00px;width:832.80px;height:1012.20px;background:transparent;box-sizing:border-box;border:1.8px solid #8a8a8a;"></div><div class="t" style="left:385.60px;top:81.45px;font-size:25.1px;line-height:25.1px;color:#9a9a9a;transform:scaleX(0.910);transform-origin:0 0;">Log on as a service Properties</div><div class="t" style="left:1055.50px;top:82.38px;font-size:24px;line-height:24px;color:#7a7a7a;-webkit-text-stroke:0px;">?</div><svg class="r" style="left:1139.50px;top:80.80px;" width="24.299999999999955" height="23.900000000000006" viewBox="0 0 24.299999999999955 23.900000000000006"><path d="M2,2 L22.30,21.90 M22.30,2 L2,21.90" stroke="#7a7a7a" stroke-width="1.7" fill="none"/></svg><div class="r" style="left:617.00px;top:144.00px;width:84.50px;height:37.00px;background:#f0f0f0;box-sizing:border-box;border:1.6px solid #d9d9d9;"></div><div class="r" style="left:381.00px;top:179.30px;width:800.20px;height:820.20px;background:#ffffff;box-sizing:border-box;border:1.6px solid #d9d9d9;"></div><div class="r" style="left:381.00px;top:139.00px;width:237.00px;height:42.00px;background:#ffffff;box-sizing:border-box;border:1.6px solid #d9d9d9;border-bottom:none;"></div><div class="t" style="left:397.00px;top:145.91px;font-size:25.5px;line-height:25.5px;color:#000;-webkit-text-stroke:0.12px currentColor;transform:scaleX(0.825);transform-origin:0 0;">Local Security Setting</div><div class="t" style="left:627.00px;top:149.21px;font-size:25.5px;line-height:25.5px;color:#000;-webkit-text-stroke:0.12px currentColor;transform:scaleX(0.800);transform-origin:0 0;">Explain</div><svg class="r" style="left:410.40px;top:204.70px;" width="59" height="62" viewBox="0 0 59 62"><defs><linearGradient id="tw1" x1="0" y1="0" x2="1" y2="0"><stop offset="0" stop-color="#fbfbfb"/><stop offset="0.5" stop-color="#b8bbbe"/><stop offset="1" stop-color="#8a8e92"/></linearGradient>
<linearGradient id="tw2" x1="0" y1="0" x2="1" y2="0"><stop offset="0" stop-color="#dfe3e8"/><stop offset="1" stop-color="#aab0b8"/></linearGradient></defs>
<path d="M37,0.5 L57.5,0.5 L57.5,52 L37,61.5 Z" fill="url(#tw1)"/>
<rect x="20.5" y="0.5" width="16.5" height="61" fill="url(#tw2)"/>
<rect x="35.8" y="0.5" width="1.8" height="61" fill="#4a5560"/>
<rect x="21.5" y="1.2" width="14" height="2.4" rx="1" fill="#2e3c48"/>
<rect x="21.5" y="4" width="14" height="4" fill="#f6f8fa"/>
<rect x="21.5" y="9.5" width="14" height="1.6" fill="#56616b"/>
<rect x="21.5" y="11.5" width="14" height="3" fill="#e8ecf0"/>
<rect x="21.5" y="15.5" width="14" height="1.6" fill="#56616b"/>
<rect x="21.5" y="17.5" width="14" height="3" fill="#e8ecf0"/>
<rect x="21.5" y="21.5" width="14" height="1.6" fill="#56616b"/>
<rect x="21.5" y="23.5" width="14" height="5" fill="#f2f5f8"/>
<rect x="21.5" y="29.5" width="14" height="30" fill="#8e98a4"/>
<rect x="21.5" y="36" width="14" height="1.4" fill="#c0c6cc"/><rect x="21.5" y="42" width="14" height="1.4" fill="#c0c6cc"/><rect x="21.5" y="48" width="14" height="1.4" fill="#c0c6cc"/>
<circle cx="33.2" cy="55.8" r="2.2" fill="#5ccc3a"/>
<path d="M3,30.5 L27.5,30.5 L27.5,56 L3,56 Z" fill="#fbf3d2" stroke="#c8b888" stroke-width="0.9"/>
<rect x="0.5" y="52.5" width="25" height="7" rx="3.5" fill="#eadcaa" stroke="#b8a878" stroke-width="0.9"/>
<rect x="2.5" y="54.5" width="18" height="2.4" fill="#fff8dc"/>
<rect x="8" y="35.5" width="12" height="1.7" fill="#6a6a80"/><rect x="8" y="39.5" width="12" height="1.7" fill="#6a6a80"/><rect x="8" y="43.5" width="12" height="1.7" fill="#6a6a80"/><rect x="8" y="47.5" width="12" height="1.7" fill="#6a6a80"/></svg><div class="t" style="left:509.40px;top:205.21px;font-size:25.5px;line-height:25.5px;color:#000;-webkit-text-stroke:0.12px currentColor;transform:scaleX(0.827);transform-origin:0 0;">Log on as a service</div><div class="r" style="left:410.80px;top:365.40px;width:710.50px;height:331.60px;background:#ffffff;box-sizing:border-box;border:1.8px solid #828790;"></div><div class="t" style="left:418.00px;top:369.21px;font-size:25.5px;line-height:25.5px;color:#000;-webkit-text-stroke:0.12px currentColor;transform:scaleX(0.843);transform-origin:0 0;">NT SERVICE\ALL SERVICES</div><div class="r" style="left:412.60px;top:710.50px;width:295.40px;height:41.00px;background:#e1e1e1;box-sizing:border-box;border:2px solid #adadad;"></div><div class="t" style="left:462.70px;top:718.51px;font-size:25.5px;line-height:25.5px;color:#000;-webkit-text-stroke:0.12px currentColor;transform:scaleX(0.816);transform-origin:0 0;">Add User or Group...</div><div class="r" style="left:724.40px;top:710.50px;width:145.60px;height:41.00px;background:#cccccc;box-sizing:border-box;border:2px solid #bfbfbf;"></div><div class="t" style="left:757.00px;top:718.51px;font-size:25.5px;line-height:25.5px;color:#838383;-webkit-text-stroke:0.12px currentColor;transform:scaleX(0.812);transform-origin:0 0;">Remove</div><div class="r" style="left:714.60px;top:1016.00px;width:145.10px;height:41.00px;background:#e1e1e1;box-sizing:border-box;border:2px solid #adadad;"></div><div class="t" style="left:771.30px;top:1024.81px;font-size:25.5px;line-height:25.5px;color:#000;-webkit-text-stroke:0.12px currentColor;transform:scaleX(0.824);transform-origin:0 0;">OK</div><div class="r" style="left:876.40px;top:1016.00px;width:145.10px;height:41.00px;background:#e1e1e1;box-sizing:border-box;border:2px solid #adadad;"></div><div class="t" style="left:915.50px;top:1024.81px;font-size:25.5px;line-height:25.5px;color:#000;-webkit-text-stroke:0.12px currentColor;transform:scaleX(0.816);transform-origin:0 0;">Cancel</div><div class="r" style="left:1038.00px;top:1016.00px;width:146.00px;height:41.00px;background:#cccccc;box-sizing:border-box;border:2px solid #bfbfbf;"></div><div class="t" style="left:1084.00px;top:1024.81px;font-size:25.5px;line-height:25.5px;color:#838383;-webkit-text-stroke:0.12px currentColor;transform:scaleX(0.784);transform-origin:0 0;">Apply</div><div class="r" style="left:1164.50px;top:223.00px;width:913.30px;height:502.00px;background:#f0f0f0;"></div><div class="r" style="left:1164.50px;top:223.00px;width:913.30px;height:61.80px;background:#ffffff;"></div><div class="r" style="left:1164.50px;top:223.00px;width:913.30px;height:502.00px;background:transparent;box-sizing:border-box;border:1.8px solid #555555;"></div><div class="t" style="left:1182.40px;top:241.45px;font-size:25.1px;line-height:25.1px;color:#000;transform:scaleX(0.892);transform-origin:0 0;">Select Users or Groups</div><svg class="r" style="left:2035.00px;top:240.00px;" width="25" height="24.80000000000001" viewBox="0 0 25 24.80000000000001"><path d="M2,2 L23.00,22.80 M23.00,2 L2,22.80" stroke="#000" stroke-width="1.9" fill="none"/></svg><div class="t" style="left:1188.50px;top:307.01px;font-size:25.5px;line-height:25.5px;color:#000;-webkit-text-stroke:0.12px currentColor;transform:scaleX(0.831);transform-origin:0 0;">Select this object type:</div><div class="r" style="left:1188.30px;top:340.50px;width:674.70px;height:45.50px;background:#f0f0f0;box-sizing:border-box;border:2px solid #7a7a7a;box-shadow:inset 0 0 0 2px #fff;"></div><div class="t" style="left:1195.00px;top:347.11px;font-size:25.5px;line-height:25.5px;color:#000;-webkit-text-stroke:0.12px currentColor;transform:scaleX(0.804);transform-origin:0 0;">Users or Built-in security principals</div><div class="t" style="left:1188.50px;top:399.51px;font-size:25.5px;line-height:25.5px;color:#000;-webkit-text-stroke:0.12px currentColor;transform:scaleX(0.808);transform-origin:0 0;">From this location:</div><div class="r" style="left:1188.30px;top:430.50px;width:674.70px;height:45.00px;background:#f0f0f0;box-sizing:border-box;border:2px solid #7a7a7a;box-shadow:inset 0 0 0 2px #fff;"></div><div class="t" style="left:1195.00px;top:437.21px;font-size:25.5px;line-height:25.5px;color:#000;-webkit-text-stroke:0.12px currentColor;transform:scaleX(0.824);transform-origin:0 0;">EC2AMAZ-FAN98V3</div><div class="t" style="left:1188.50px;top:498.91px;font-size:25.5px;line-height:25.5px;color:#000;-webkit-text-stroke:0.12px currentColor;transform:scaleX(0.820);transform-origin:0 0;"><span style="text-decoration:underline">E</span>nter the object names to select (<span style="color:#0066cc;text-decoration:underline">examples</span>):</div><div class="r" style="left:1188.3px;top:532.5px;width:673px;height:111.5px;background:#fff;box-sizing:border-box;border-top:3.5px solid #6a6a6a;border-left:3px solid #6a6a6a;border-right:2px solid #e6e6e6;border-bottom:2px solid #e6e6e6;"></div><div class="t" style="left:1194.60px;top:538.51px;font-size:25.5px;line-height:25.5px;color:#000;-webkit-text-stroke:0.12px currentColor;transform:scaleX(0.800);transform-origin:0 0;">Administrator</div><div class="r" style="left:1314.50px;top:538.00px;width:1.80px;height:25.50px;background:#000;"></div><div class="r" style="left:1878.00px;top:343.00px;width:175.30px;height:40.30px;background:#e1e1e1;box-sizing:border-box;border:2px solid #adadad;"></div><div class="t" style="left:1892.70px;top:350.01px;font-size:25.5px;line-height:25.5px;color:#000;-webkit-text-stroke:0.12px currentColor;transform:scaleX(0.847);transform-origin:0 0;">Object Types...</div><div class="r" style="left:1878.00px;top:432.70px;width:175.30px;height:40.80px;background:#e1e1e1;box-sizing:border-box;border:2px solid #adadad;"></div><div class="t" style="left:1910.50px;top:440.31px;font-size:25.5px;line-height:25.5px;color:#000;-webkit-text-stroke:0.12px currentColor;transform:scaleX(0.827);transform-origin:0 0;">Locations...</div><div class="r" style="left:1877.90px;top:534.60px;width:175.40px;height:40.90px;background:#e1e1e1;box-sizing:border-box;border:2px solid #adadad;"></div><div class="t" style="left:1896.30px;top:542.51px;font-size:25.5px;line-height:25.5px;color:#000;-webkit-text-stroke:0.12px currentColor;transform:scaleX(0.835);transform-origin:0 0;">Check Names</div><div class="r" style="left:1190.50px;top:664.70px;width:174.90px;height:40.60px;background:#e1e1e1;box-sizing:border-box;border:2px solid #adadad;"></div><div class="t" style="left:1221.00px;top:672.51px;font-size:25.5px;line-height:25.5px;color:#000;-webkit-text-stroke:0.12px currentColor;transform:scaleX(0.847);transform-origin:0 0;">Advanced...</div><div class="r" style="left:1745.70px;top:664.00px;width:145.70px;height:42.00px;background:#e1e1e1;box-sizing:border-box;border:4px solid #2a72d6;"></div><div class="t" style="left:1802.80px;top:672.41px;font-size:25.5px;line-height:25.5px;color:#000;-webkit-text-stroke:0.12px currentColor;transform:scaleX(0.824);transform-origin:0 0;">OK</div><div class="r" style="left:1908.00px;top:664.50px;width:145.30px;height:41.00px;background:#e1e1e1;box-sizing:border-box;border:2px solid #adadad;"></div><div class="t" style="left:1946.40px;top:672.41px;font-size:25.5px;line-height:25.5px;color:#000;-webkit-text-stroke:0.12px currentColor;transform:scaleX(0.816);transform-origin:0 0;">Cancel</div><div class="r" style="left:2068.00px;top:707.00px;width:2.60px;height:2.60px;background:#b0b0b0;"></div><div class="r" style="left:2068.00px;top:712.50px;width:2.60px;height:2.60px;background:#b0b0b0;"></div><div class="r" style="left:2068.00px;top:718.00px;width:2.60px;height:2.60px;background:#b0b0b0;"></div><div class="r" style="left:2062.50px;top:712.50px;width:2.60px;height:2.60px;background:#b0b0b0;"></div><div class="r" style="left:2062.50px;top:718.00px;width:2.60px;height:2.60px;background:#b0b0b0;"></div><div class="r" style="left:2057.00px;top:718.00px;width:2.60px;height:2.60px;background:#b0b0b0;"></div><div class="r" style="left:0.00px;top:1357.50px;width:2262.00px;height:80.50px;background:#020307;"></div><div class="r" style="left:0.00px;top:1436.00px;width:2262.00px;height:2.00px;background:#3f3f3f;"></div><svg class="r" style="left:14.10px;top:1381.20px;" width="33" height="33" viewBox="0 0 33 33"><path d="M0,4.1 L12.5,2.4 V14.2 H0 Z M14.5,2.1 L32.6,0 V14.2 H14.5 Z M0,16.7 H12.5 V28.5 L0,26.8 Z M14.5,16.7 H32.6 V32.6 L14.5,30.6 Z" fill="#fff"/></svg><div class="r" style="left:78.50px;top:1357.50px;width:639.80px;height:78.50px;background:#f0f0f0;"></div><div class="r" style="left:78.50px;top:1435.30px;width:639.80px;height:2.70px;background:#c8c8c8;"></div><svg class="r" style="left:100.00px;top:1378.00px;" width="36" height="38" viewBox="0 0 36 38"><circle cx="23.4" cy="14.2" r="9.8" fill="none" stroke="#1a1a1a" stroke-width="2"/><path d="M16.2,21.8 L3.2,34.6" stroke="#1a1a1a" stroke-width="2.2"/></svg><div class="t" style="left:159.60px;top:1382.49px;font-size:32.5px;line-height:32.5px;color:#333333;-webkit-text-stroke:0.15px currentColor;transform:scaleX(0.882);transform-origin:0 0;">Type here to search</div><svg class="r" style="left:748.00px;top:1379.00px;" width="36" height="36" viewBox="0 0 36 36"><path d="M3,2.8 V7 H22.6 V2.8 M3,32.5 V28.3 H22.6 V32.5" fill="none" stroke="#fff" stroke-width="2.1"/><rect x="3" y="11" width="19.6" height="13.3" fill="none" stroke="#fff" stroke-width="2.1"/><path d="M31.2,2.8 V8.5 M31.2,18 V32.5" stroke="#fff" stroke-width="2.1"/><rect x="28.3" y="10.3" width="5.8" height="5.9" fill="#fff"/></svg><svg class="r" style="left:844.20px;top:1373.20px;" width="48" height="48" viewBox="0 0 48 48"><defs><linearGradient id="eg1" x1="0" y1="0" x2="1" y2="0.7"><stop offset="0" stop-color="#4fc0f0"/><stop offset="0.5" stop-color="#62c8b8"/><stop offset="1" stop-color="#8ee46a"/></linearGradient>
<linearGradient id="eg2" x1="0" y1="0" x2="0.4" y2="1"><stop offset="0" stop-color="#46a0ec"/><stop offset="1" stop-color="#3370d0"/></linearGradient>
<clipPath id="egc"><circle cx="24" cy="24" r="23.8"/></clipPath></defs>
<g clip-path="url(#egc)">
<rect x="0" y="0" width="48" height="48" fill="url(#eg1)"/>
<path d="M-1,25 C-1,17 7,12 15,12 C21,12 26,14 28,18 L28,20 C23,22 21,28 24,34 C27,39 34,41 42,38 L50,34 L50,50 L-1,50 Z" fill="url(#eg2)"/>
<path d="M14,20 C11,30 16,42 27,45 C33,46.5 38,45 41,42 C33,44 26,40 23,33 C21,28 22,24 24,21 Z" fill="#2a56a6" opacity="0.85"/>
<path d="M28,20 C25,21 23,25 23.5,29 C24.5,35 30,39 37,39.5 C41,39.5 44,38 46,35.5 C42,37 37,37 34,35 C30,32.5 29.5,28 31,25 C30.5,22 29.5,20.5 28,20 Z" fill="#03060c"/>
</g></svg><svg class="r" style="left:944.00px;top:1379.00px;" width="43" height="36" viewBox="0 0 43 36"><path d="M0,2 H14 L17,5 H43 V36 H0 Z" fill="#e8b94a"/><rect x="0" y="7" width="43" height="29" fill="#fcd46c"/><path d="M0,21 H43 V36 H0 Z" fill="#f8c85a" opacity="0.4"/><path d="M8,21 H35 V36 H28 V29 H15 V36 H8 Z" fill="#3d8ee0"/><rect x="15" y="29" width="13" height="7" fill="#f6cf68"/></svg><div class="r" style="left:1016.30px;top:1357.50px;width:95.50px;height:78.50px;background:#353638;"></div><div class="r" style="left:1016.30px;top:1433.00px;width:95.50px;height:5.00px;background:#99c7f0;"></div><svg class="r" style="left:1046.00px;top:1372.00px;" width="42" height="50" viewBox="0 0 42 50"><defs><linearGradient id="tsd" x1="0" y1="0" x2="1" y2="0"><stop offset="0" stop-color="#d6d8da"/><stop offset="1" stop-color="#7c8084"/></linearGradient></defs><path d="M13.7,1.8 H30 V40 L13.7,45.7 Z" fill="url(#tsd)"/><rect x="2" y="1.8" width="11.7" height="44" fill="#9da2a8"/><rect x="3" y="4" width="10" height="3" fill="#f2f4f6"/><rect x="3" y="9" width="10" height="2" fill="#c0c4c8"/><rect x="3" y="12.5" width="10" height="1.6" fill="#55595e"/><rect x="3" y="19" width="10" height="3.6" fill="#eef0f2"/><rect x="3" y="25" width="10" height="1.6" fill="#55595e"/><rect x="3" y="29" width="10" height="1.6" fill="#c8ccd0"/><rect x="3" y="33" width="10" height="1.6" fill="#55595e"/><circle cx="11.5" cy="43" r="1.8" fill="#58c040"/><defs><linearGradient id="lk28" x1="0" y1="0" x2="1" y2="0"><stop offset="0" stop-color="#e6bf4a"/><stop offset="0.3" stop-color="#f3d86a"/><stop offset="1" stop-color="#b88d2c"/></linearGradient><linearGradient id="lks29" x1="0" y1="0" x2="1" y2="0"><stop offset="0" stop-color="#9a7a34"/><stop offset="0.5" stop-color="#c9a444"/><stop offset="1" stop-color="#8c6a24"/></linearGradient></defs><rect x="22.97" y="25.50" width="13.86" height="11.85" rx="3.17" fill="url(#lks29)"/><rect x="27.53" y="30.24" width="5.15" height="6.16" fill="#fffdf4"/><rect x="20.20" y="35.93" width="19.80" height="13.27" rx="0.6" fill="url(#lk28)"/><rect x="20.20" y="40.19" width="19.80" height="1.66" fill="#a98224" opacity="0.75"/><rect x="20.20" y="44.46" width="19.80" height="1.66" fill="#a98224" opacity="0.75"/><rect x="20.20" y="47.78" width="19.80" height="1.42" fill="#9a7420" opacity="0.8"/></svg><svg class="r" style="left:1953.00px;top:1383.00px;" width="38" height="30" viewBox="0 0 38 30"><rect x="9" y="2.5" width="23" height="17" fill="none" stroke="#fff" stroke-width="2"/><rect x="2" y="2" width="8" height="8" fill="#020307" stroke="#fff" stroke-width="1.8"/><path d="M4,5 L6,7 L8,5" stroke="#fff" stroke-width="1.2" fill="none"/><path d="M4,10 V27 M4,23 H8 M12,25.5 H24 M18,19.5 V25.5" stroke="#fff" stroke-width="2" fill="none"/></svg><svg class="r" style="left:2001.00px;top:1384.00px;" width="38" height="34" viewBox="0 0 38 34"><path d="M3,9 H8 L16,2 V27 L8,20 H3 Z" fill="none" stroke="#fff" stroke-width="2"/><circle cx="25.7" cy="20.3" r="9" fill="#e02a2a"/><path d="M21.5,16 L30,24.6 M30,16 L21.5,24.6" stroke="#fff" stroke-width="2.2"/></svg><div class="t" style="left:2060.80px;top:1365.61px;font-size:25.5px;line-height:25.5px;color:#ffffff;transform:scaleX(0.863);transform-origin:0 0;">12:10 PM</div><div class="t" style="left:2061.00px;top:1401.61px;font-size:25.5px;line-height:25.5px;color:#ffffff;transform:scaleX(0.933);transform-origin:0 0;">3/7/2024</div><svg class="r" style="left:2193.00px;top:1380.00px;" width="36" height="35" viewBox="0 0 36 35"><path d="M2.5,2.5 H32.5 V25 H22 L17.5,30.5 L13,25 H2.5 Z" fill="none" stroke="#fff" stroke-width="2"/></svg>
</body></html>
